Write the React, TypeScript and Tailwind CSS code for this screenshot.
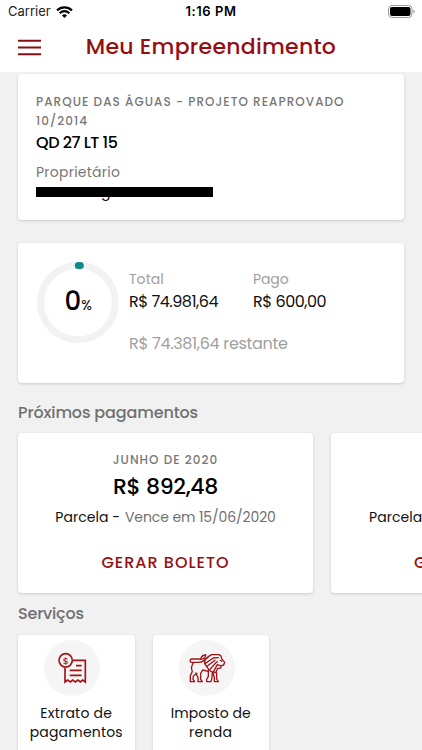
import type { ReactNode } from 'react';

function StatusBar() {
  return (
    <div className="relative flex h-6 items-center justify-between pl-2 pr-[7px] font-['Inter',sans-serif]">
      <div className="flex items-center gap-[5px] text-[13px] text-[#222]">
        <span>Carrier</span>
        <svg width="17" height="12" viewBox="0 0 17 12" fill="none" stroke="#000" strokeWidth="2.2">
          <path d="M1 4.4a10.6 10.6 0 0 1 15 0" />
          <path d="M3.7 7.2a6.8 6.8 0 0 1 9.6 0" />
          <path d="M8.5 12 6 9.5a3.5 3.5 0 0 1 5 0z" fill="#000" stroke="none" />
        </svg>
      </div>
      <span className="absolute inset-x-0 text-center text-[13px] font-semibold tracking-[0.56px] text-black">1:16 PM</span>
      <svg className="-mt-px" width="27" height="13" viewBox="0 0 27 13" fill="none">
        <rect x="0.5" y="0.5" width="23.5" height="12" rx="3.5" stroke="#999" />
        <rect x="2" y="2" width="20.5" height="9" rx="2" fill="#000" />
        <path d="M25.4 4.5a2.2 2.2 0 0 1 0 4z" fill="#999" />
      </svg>
    </div>
  );
}

function Card({ className = '', children }: { className?: string; children?: ReactNode }) {
  return <div className={`rounded bg-white shadow-[0_1px_3px_rgba(0,0,0,0.16)] ${className}`}>{children}</div>;
}

function PaymentCard({ month, value, due }: { month: string; value: string; due: string }) {
  return (
    <Card className="flex h-40 w-[295px] shrink-0 flex-col items-center whitespace-nowrap pt-[18px]">
      <p className="h-[18px] text-xs leading-[18px] font-medium tracking-[1.05px] text-[#777]">{month}</p>
      <p className="mt-[3px] h-[30px] text-[22px] leading-[30px] font-medium tracking-[-0.31px] text-black">{value}</p>
      <p className="mt-[5px] flex h-5 gap-[5px] text-sm leading-5">
        <span className="tracking-[0.05px] text-[#111]">Parcela -</span>
        <span className="tracking-[-0.11px] text-[#707070]">{due}</span>
      </p>
      <p className="mt-[26px] h-5 text-base leading-5 font-medium tracking-[1.01px] text-[#950e12]">GERAR BOLETO</p>
    </Card>
  );
}

function ServiceCard({ icon, children }: { icon: ReactNode; children: ReactNode }) {
  return (
    <Card className="flex h-[130px] w-[116.5px] shrink-0 flex-col items-center pt-[5px]">
      <div className="mr-2 h-14 w-14 rounded-full bg-[#f5f5f5]">{icon}</div>
      <div className="mt-2 text-center text-sm leading-[19px] text-[#111]">{children}</div>
    </Card>
  );
}

function ReceiptIcon() {
  return (
    <svg width="56" height="56" viewBox="6 6 168 168" fill="none" stroke="#a31419" strokeWidth="5">
      <circle cx="71" cy="67" r="20" />
      <path d="M93 67h37v65l-8-6-7 6-7-6-8 6-8-6-7 6-8-6-8 6V88" />
      <path d="M102 83h17M83 97h36M83 112h36" />
      <text x="71" y="77" textAnchor="middle" fontSize="28" fontWeight="500" fill="#a31419" stroke="none">$</text>
    </svg>
  );
}

function LionIcon() {
  return (
    <svg width="56" height="56" viewBox="538 119 168 168" fill="none" stroke="#a31419" strokeWidth="4" strokeLinejoin="round" strokeLinecap="round">
      {/* tail and back */}
      <path d="M618 164c-10 0-13 5-15 12h-27c-6 0-6 10 0 10h20c12 0 16-3 22-9l8-8" />
      <path d="M603 176c9 2 14-4 15-12" />
      {/* hind legs */}
      <path d="M582 187c-7 8-7 20-4 27l-6 11v19h13l-5-7 1-10 11-8" />
      <path d="M588 218l7 13v13h13l-5-7v-18l6-10 17 4" />
      {/* front legs */}
      <path d="M626 208v20l-5 9v7h13l3-12 1-16M640 217l4 15v12h12l-5-8v-19" />
      {/* mane and face */}
      <path d="M626 169l10-6h22l6 4 2 8 9 11-3 8-7 2-2 7-9 1-6 13-15-4-10-11-8-12 1-13z" />
      <path d="M617 189l24-16 15-1M622 198l24-18M631 207l17-19 5-4M642 213l11-20 9 3M662 180l4 3" />
    </svg>
  );
}

export default function App() {
  return (
    <div className="h-[750px] w-[422px] overflow-hidden bg-[#f1f1f1] font-['Poppins','Inter',sans-serif]">
      <header className="h-[72px] bg-white">
        <StatusBar />
        <div className="relative flex h-[46px] items-center pl-[18px]">
          <svg width="24" height="17" viewBox="0 0 24 17" stroke="#8b0d11" strokeWidth="2">
            <path d="M0 1.7h23M0 8.5h23M0 15.3h23" />
          </svg>
          <h1 className="absolute inset-x-0 text-center text-[22px] leading-[44px] font-medium tracking-[0.25px] text-[#950e12]">Meu Empreendimento</h1>
        </div>
      </header>

      <main className="px-[18px] pt-0.5">
        <Card className="h-[146px] px-[18px] pt-[18px]">
          <p className="text-xs leading-[19px] font-medium tracking-[1.05px] text-[#777]">
            PARQUE DAS ÁGUAS - PROJETO REAPROVADO
            <br />
            10/2014
          </p>
          <p className="mt-[3px] text-base leading-[19px] font-medium tracking-[-0.46px] text-black">QD 27 LT 15</p>
          <p className="mt-2.5 text-sm leading-5 tracking-[0.24px] text-[#777]">Proprietário</p>
          {/* hidden owner name */}
          <div className="relative mt-[5px] h-[9.5px] w-[177px]">
            <span className="absolute left-[65px] top-[-4px] text-sm leading-[18px] text-black">g</span>
            <div className="absolute inset-0 bg-black" />
          </div>
        </Card>

        <Card className="mt-[23px] flex h-[140px] pl-[19px] pt-[18px]">
          <div className="relative h-[83px] w-[82px] shrink-0">
            <svg width="82" height="83" viewBox="0 0 82 83" fill="none">
              <circle cx="41" cy="41.5" r="37.3" stroke="#f2f2f2" strokeWidth="7" />
              <path d="M41.3 4.5h2" stroke="#0d8a86" strokeWidth="7" strokeLinecap="round" />
            </svg>
            <div className="absolute inset-0 flex items-baseline justify-center pt-[22px] text-black">
              <span className="text-[26px] leading-[36px] font-medium">0</span>
              <span className="text-sm tracking-tight">%</span>
            </div>
          </div>
          <div className="ml-[10px] pt-2">
            <div className="flex">
              <div className="w-[124px]">
                <p className="text-sm leading-5 tracking-[0.05px] text-[#a0a0a0]">Total</p>
                <p className="mt-[3px] text-base leading-5 tracking-[-0.48px] text-[#111]">R$ 74.981,64</p>
              </div>
              <div>
                <p className="text-sm leading-5 tracking-[-0.11px] text-[#a0a0a0]">Pago</p>
                <p className="mt-[3px] text-base leading-5 tracking-[-0.48px] text-[#111]">R$ 600,00</p>
              </div>
            </div>
            <p className="mt-[22px] text-base leading-5 tracking-[-0.32px] text-[#a0a0a0]">R$ 74.381,64 restante</p>
          </div>
        </Card>

        <h2 className="mt-[19px] text-base leading-[22px] font-medium tracking-[-0.14px] text-[#707070]">Próximos pagamentos</h2>
        <div className="mt-[9px] flex gap-[18px]">
          <PaymentCard month="JUNHO DE 2020" value="R$ 892,48" due="Vence em 15/06/2020" />
          {/* next month, only its left edge fits */}
          <Card className="flex h-40 w-[295px] shrink-0 flex-col whitespace-nowrap pt-[74px]">
            <p className="h-5 pl-[38px] text-sm leading-5 tracking-[0.05px] text-[#111]">Parcela -</p>
            <p className="mt-[26px] h-5 pl-[83px] text-base leading-5 font-medium tracking-[1.01px] text-[#950e12]">GERAR BOLETO</p>
          </Card>
        </div>

        <h2 className="mt-[10px] text-base leading-[22px] font-medium tracking-[-0.2px] text-[#707070]">Serviços</h2>
        <div className="mt-[9.5px] flex gap-[18px]">
          <ServiceCard icon={<ReceiptIcon />}>
            <p className="tracking-[0.23px]">Extrato de</p>
            <p className="tracking-[0.19px]">pagamentos</p>
          </ServiceCard>
          <ServiceCard icon={<LionIcon />}>
            <p className="tracking-[0.07px]">Imposto de</p>
            <p className="tracking-[0.29px]">renda</p>
          </ServiceCard>
        </div>
      </main>
    </div>
  );
}
